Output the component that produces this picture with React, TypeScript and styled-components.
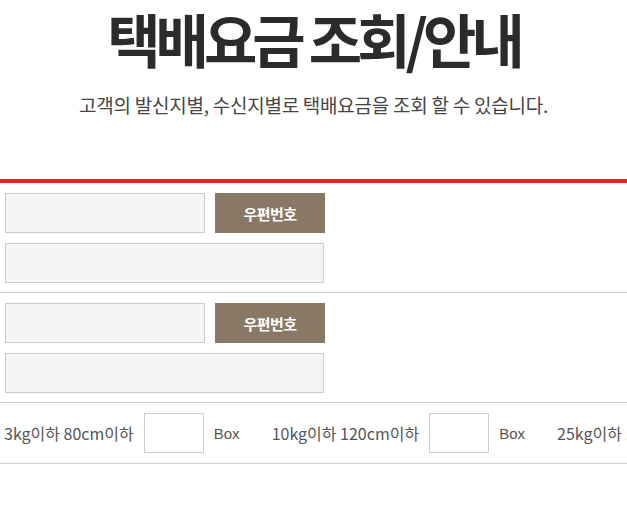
import React from 'react';
import styled, { createGlobalStyle } from 'styled-components';

const GlobalStyle = createGlobalStyle`
  html, body {
    margin: 0;
    padding: 0;
    background: #fff;
    overflow: hidden;
  }

  body {
    font-family: 'Noto Sans CJK KR', 'Noto Sans', sans-serif;
    color: #444;
  }

  * {
    box-sizing: border-box;
  }
`;

const PageHeader = styled.header`
  text-align: center;
  padding-top: 2px;
`;

const Title = styled.h2`
  margin: 0;
  font-size: 58px;
  line-height: 72px;
  font-weight: 700;
  letter-spacing: -5px;
  color: #2b2b2b;
`;

const Description = styled.p`
  margin: 19px 0 0;
  font-size: 19px;
  line-height: 24px;
  letter-spacing: -0.25px;
  color: #444;
`;

const FeeForm = styled.form`
  margin-top: 62px;
  border-top: 4px solid #e02a1f;
`;

const AddressBlock = styled.div`
  display: flex;
  flex-direction: column;
  gap: 10px;
  padding: 10px 5px 9px;
  border-bottom: 1px solid #cfcfcf;
`;

const ZipRow = styled.div`
  display: flex;
  gap: 10px;
`;

const FieldInput = styled.input<{ $width: number }>`
  width: ${(props) => props.$width}px;
  height: 40px;
  margin: 0;
  padding: 0 10px;
  background: #f5f5f5;
  border: 1px solid #cccccc;
  border-radius: 0;
  outline: none;
`;

const ZipButton = styled.button`
  width: 110px;
  height: 40px;
  margin: 0;
  padding: 0;
  border: none;
  background: #8a7867;
  color: #fff;
  font-family: 'Noto Sans CJK KR', sans-serif;
  font-size: 15px;
  font-weight: 700;
  letter-spacing: -0.6px;
  cursor: pointer;
`;

const BoxRow = styled.div`
  display: flex;
  align-items: center;
  padding: 10px 0 10px 4px;
  border-bottom: 1px solid #cfcfcf;
  white-space: nowrap;
  overflow: hidden;
`;

const BoxItem = styled.label`
  display: flex;
  align-items: center;
  flex-shrink: 0;
  gap: 10px;
  margin-right: 32px;
  font-size: 16px;
  letter-spacing: 0;
  color: #555;
`;

const QtyInput = styled.input`
  width: 60px;
  height: 40px;
  margin: 0;
  padding: 0 6px;
  background: #fff;
  border: 1px solid #cccccc;
  border-radius: 0;
  outline: none;
`;

const BoxUnit = styled.span`
  font-family: 'Liberation Sans', 'Noto Sans CJK KR', sans-serif;
  font-size: 15px;
`;

const boxSizes = ['3kg이하 80cm이하', '10kg이하 120cm이하', '25kg이하 160cm이하'];

const AddressFields = () => (
  <AddressBlock>
    <ZipRow>
      <FieldInput $width={200} type="text" />
      <ZipButton type="button">우편번호</ZipButton>
    </ZipRow>
    <FieldInput $width={319} type="text" />
  </AddressBlock>
);

export default function App() {
  return (
    <>
      <GlobalStyle />
      <PageHeader>
        <Title>택배요금 조회/안내</Title>
        <Description>고객의 발신지별, 수신지별로 택배요금을 조회 할 수 있습니다.</Description>
      </PageHeader>

      <FeeForm onSubmit={(e) => e.preventDefault()}>
        {/* 발신지 */}
        <AddressFields />
        {/* 수신지 */}
        <AddressFields />

        {/* 박스 크기별 수량 */}
        <BoxRow>
          {boxSizes.map((size) => (
            <BoxItem key={size}>
              {size}
              <QtyInput type="text" />
              <BoxUnit>Box</BoxUnit>
            </BoxItem>
          ))}
        </BoxRow>
      </FeeForm>
    </>
  );
}
